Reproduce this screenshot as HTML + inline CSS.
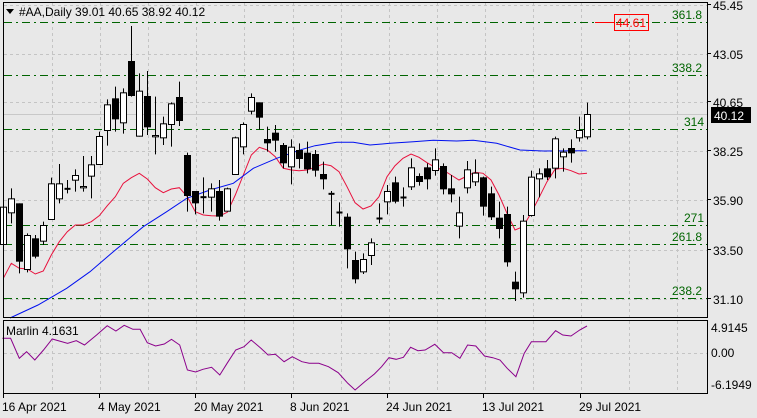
<!DOCTYPE html>
<html><head><meta charset="utf-8"><style>
html,body{margin:0;padding:0;background:#e8e8e8;width:757px;height:418px;overflow:hidden}
svg{display:block}
text{font-family:"Liberation Sans","DejaVu Sans",sans-serif;font-size:12px;fill:#000}
</style></head><body>
<svg id="s" width="757" height="418" xmlns="http://www.w3.org/2000/svg">
<rect x="0" y="0" width="757" height="418" fill="#e8e8e8"/>
<g id="grid"></g>
<g id="fib"></g>
<g id="lines"></g>
<g id="candles"></g>
<rect x="3.5" y="2.5" width="704" height="315" fill="none" stroke="#000"/>
<rect x="3.5" y="320.5" width="704" height="73" fill="none" stroke="#000"/>
<path d="M6 9 L14 9 L10 14 Z" fill="#000"/>
<text x="19" y="16">#AA,Daily  39.01 40.65 38.92 40.12</text>
<text x="6" y="335">Marlin 4.1631</text>
<g id="axis"></g>
<line x1="595" y1="22.5" x2="614" y2="22.5" stroke="#f00"/>
<rect x="614.5" y="14.5" width="34" height="16" fill="none" stroke="#f00"/>
<text x="616" y="27" style="fill:#f00">44.61</text>
<rect x="711" y="107" width="40" height="16" fill="#000"/>
<text x="714" y="120" style="fill:#fff">40.12</text>
</svg>
<script>
var NS="http://www.w3.org/2000/svg";
function el(p,t,a){var e=document.createElementNS(NS,t);for(var k in a)e.setAttribute(k,a[k]);document.getElementById(p).appendChild(e);return e;}
var hy=[5,54,102,151,200,250,299];
hy.forEach(function(y){el('grid','line',{x1:4,x2:707,y1:y+.5,y2:y+.5,stroke:'#c4c4c4','stroke-dasharray':'3,3'});});
for(var x=52;x<707;x+=48.1){var xx=Math.round(x)+.5;el('grid','line',{x1:xx,x2:xx,y1:3,y2:317,stroke:'#c4c4c4','stroke-dasharray':'3,3'});el('grid','line',{x1:xx,x2:xx,y1:321,y2:393,stroke:'#c4c4c4','stroke-dasharray':'3,3'});}
el('grid','line',{x1:4,x2:707,y1:353.5,y2:353.5,stroke:'#c4c4c4','stroke-dasharray':'3,3'});
el('grid','line',{x1:4,x2:707,y1:114.5,y2:114.5,stroke:'#c8c8c8'});
[[22,'361.8',672],[75,'338.2',672],[129,'314',684],[225,'271',684],[244,'261.8',672],[298,'238.2',672]].forEach(function(f){
el('fib','line',{x1:4,x2:707,y1:f[0]+.5,y2:f[0]+.5,stroke:'#006400','stroke-dasharray':'8,4,2,4'});
var t=el('fib','text',{x:f[2],y:f[0]-3});t.style.fill='#006400';t.textContent=f[1];});
[[45.45,9],[43.05,58],[40.65,106],[38.25,155],[35.90,204],[33.50,254],[31.10,303]].forEach(function(a){
el('axis','line',{x1:707,x2:711,y1:a[1]-4.5,y2:a[1]-4.5,stroke:'#000'});
var t=el('axis','text',{x:713,y:a[1]+1});t.textContent=a[0].toFixed(2);});
[['4.9145',332],['0.00',357],['-6.1949',389]].forEach(function(a){var t=el('axis','text',{x:711,y:a[1]});t.textContent=a[0];});
var d=[['16 Apr 2021',2],['4 May 2021',98],['20 May 2021',194],['8 Jun 2021',290],['24 Jun 2021',386],['13 Jul 2021',482],['29 Jul 2021',579]];
d.forEach(function(a){var t=el('axis','text',{x:a[1],y:411});t.textContent=a[0];el('axis','line',{x1:a[1]+1.5,x2:a[1]+1.5,y1:394,y2:398,stroke:'#000'});});
var c1=[[575,690,545,690,1],[550,595,520,625,1],[565,740,565,775,0],[660,765,655,772,1],[670,725,660,730,0],[630,680,620,690,1],[505,615,488,615,1],[505,553,447,565,1],[520,523,495,535,0],[480,497,463,530,1],[513,520,423,530,1],[448,485,423,550,1],[363,450,350,450,1],[268,348,253,392,1],[250,313,215,350,0],[232,325,220,356,1],[138,243,33,245,0],[227,365,175,365,1],[243,337,168,360,0],[360,367,245,418,1],[325,370,305,390,1],[265,330,262,395,1],[246,318,200,333,0],[420,543,413,590,0],[528,565,528,598,0],[545,548,487,595,0],[520,548,505,590,1],[528,605,495,617,0],[520,590,518,590,1],[367,480,365,480,1],[327,397,322,418,1],[246,290,235,298,1],[262,308,262,343,0],[372,385,335,410,0],[353,377,330,410,0],[390,445,384,460,0],[395,457,373,508,1]];
var c2=[[210,237,190,265,0],[218,268,185,280,0],[222,272,210,290,0],[282,298,245,328,0],[340,346,333,435,1],[396,399,367,440,0],[410,508,400,565,0],[540,598,515,610,0],[537,577,520,582,1],[487,528,475,555,1],[414,417,370,430,0],[333,367,315,403,1],[307,365,290,370,0],[351,353,322,380,0],[262,322,235,330,1],[288,306,280,317,0],[262,298,250,328,0],[238,273,205,287,1],[258,328,250,343,0],[325,343,285,367,0],[397,440,350,475,1],[268,325,243,340,1],[278,307,238,318,1],[292,380,290,407,0],[340,412,320,420,0],[413,447,365,475,0],[402,547,380,560,0],[605,628,575,663,0],[422,640,405,653,1],[290,408,272,410,1],[280,298,265,352,1],[265,292,240,300,0],[175,266,170,295,1],[215,232,205,275,1],[204,220,178,248,0],[150,175,110,185,1],[102,172,68,178,1]];
function draw(c,i){var x=Math.round(3+8*i)+.5;
el('candles','line',{x1:x,x2:x,y1:c[2],y2:c[3],stroke:'#000'});
var h=Math.max(1,c[1]-c[0]);
if(h<=2){el('candles','line',{x1:x-3,x2:x+3,y1:c[0]+.5,y2:c[0]+.5,stroke:'#000','stroke-width':2});return;}
el('candles','rect',{x:x-3,y:c[0]+.5,width:6,height:h-1,fill:c[4]?'#fff':'#000',stroke:'#000'});}
c1.forEach(function(c,i){draw([c[0]/3+15,c[1]/3+15,c[2]/3+15,c[3]/3+15,c[4]],i);});
c2.forEach(function(c,i){draw([c[0]/3+80,c[1]/3+80,c[2]/3+80,c[3]/3+80,c[4]],i+37);});
function poly(pts,col){el('lines','polyline',{points:pts.map(function(p){return p[0].toFixed(1)+','+p[1].toFixed(1)}).join(' '),fill:'none',stroke:col});}
var r1=[[10,790],[34,745],[58,760],[82,762],[106,777],[130,768],[154,720],[178,680],[202,650],[226,630],[250,630],[274,620],[298,602],[322,572],[346,545],[370,505],[394,488],[418,475],[442,492],[466,518],[490,533],[514,522],[538,518],[562,545],[586,590],[610,600],[634,602],[658,603],[682,592],[706,540],[730,480],[754,420],[778,397],[802,405],[826,425],[850,460],[874,465]].map(function(p){return [p[0]/3,p[1]/3+15]});
var r2=[[27,272],[51,270],[75,262],[99,252],[123,257],[147,275],[171,320],[195,368],[219,387],[243,378],[267,350],[291,290],[315,257],[339,235],[363,222],[387,232],[411,248],[435,262],[459,270],[483,285],[507,300],[531,288],[555,277],[579,280],[603,300],[627,345],[651,400],[675,450],[699,440],[723,400],[747,353],[771,305],[795,268],[819,265],[843,272],[867,282],[891,280]].map(function(p){return [p[0]/3+290,p[1]/3+80]});
poly(r1.concat(r2),'#e8103c');
var b1=[[10,318],[38,305],[200/3,820/3+15],[90,770/3+15],[340/3,710/3+15],[430/3,635/3+15],[500/3,590/3+15],[560/3,550/3+15],[210,525/3+15],[700/3,505/3+15],[760/3,460/3+15],[830/3,430/3+15]];
var b2=[[30,210],[75,197],[140,187],[190,187],[240,195],[300,190],[370,185],[430,181],[500,183],[550,181],[620,190],[690,210],[760,213],[890,212]].map(function(p){return [p[0]/3+290,p[1]/3+80]});
poly(b1.concat(b2),'#0010f0');
var m=[[5,115],[22,115],[40,175],[55,155],[72,180],[90,150],[108,117],[140,130],[158,122],[175,135],[200,105],[222,77],[240,93],[257,76],[275,88],[290,88],[305,128],[322,138],[340,132],[355,118],[372,135],[388,210],[405,216],[420,208],[438,202],[455,225],[470,190],[488,150],[505,140],[520,120],[540,145],[555,165],[570,163],[588,185],[605,170],[625,185],[640,190],[660,190],[680,200],[700,218],[720,250],[735,270],[755,245],[775,222],[790,200],[805,173],[820,178],[835,172],[850,142],[865,152],[880,150],[900,133],[918,158],[935,158],[952,175],[968,135],[985,138],[1003,168],[1020,173],[1035,180],[1050,205],[1068,230],[1085,160],[1100,125],[1130,125],[1150,92],[1165,105],[1182,108],[1200,90],[1215,78]].map(function(p){return [p[0]/2.07,p[1]/3+300]});
poly(m,'#8b008b');
</script>
</body></html>
